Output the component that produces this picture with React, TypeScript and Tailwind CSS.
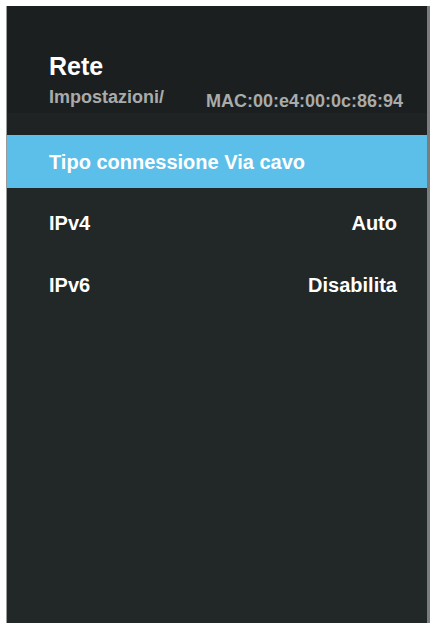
import React from "react";

const rows = [
  { label: "IPv4", value: "Auto" },
  { label: "IPv6", value: "Disabilita" },
];

export default function App() {
  return (
    <div
      className="w-[432px] h-[623px] bg-white overflow-hidden pt-[6px] pl-[6px]"
      style={{ fontFamily: '"Liberation Sans", Arial, sans-serif' }}
    >
      <div className="w-[424px] h-[640px] bg-[#222727] border-r-[3px] border-r-[#7a7d7d] border-l border-l-[#9a9c9c] flex flex-col">
        <div className="h-[107px] bg-[#1c1f1f] pl-[42px] pr-[24px] pt-[47px]">
          <div className="text-[25px] leading-[26px] font-bold text-white">Rete</div>
          <div className="flex items-end mt-[8px]">
            <span className="text-[18px] leading-[20px] font-bold text-[#a9abab]">Impostazioni/</span>
            <span className="ml-auto text-[18px] leading-[20px] font-bold text-[#a9abab] translate-y-[4px]">
              MAC:00:e4:00:0c:86:94
            </span>
          </div>
        </div>
        <div className="h-[22px] bg-[#202323]" />
        <div className="h-[53px] bg-[#5bbfe9] flex items-center pl-[42px]">
          <span className="text-[20px] font-bold text-white">Tipo connessione Via cavo</span>
        </div>
        <div className="flex flex-col pt-[8px] gap-[9px]">
          {rows.map((r) => (
            <div key={r.label} className="h-[53px] flex items-center justify-between pl-[42px] pr-[30px]">
              <span className="text-[20px] font-bold text-white">{r.label}</span>
              <span className="text-[20px] font-bold text-white">{r.value}</span>
            </div>
          ))}
        </div>
      </div>
    </div>
  );
}
